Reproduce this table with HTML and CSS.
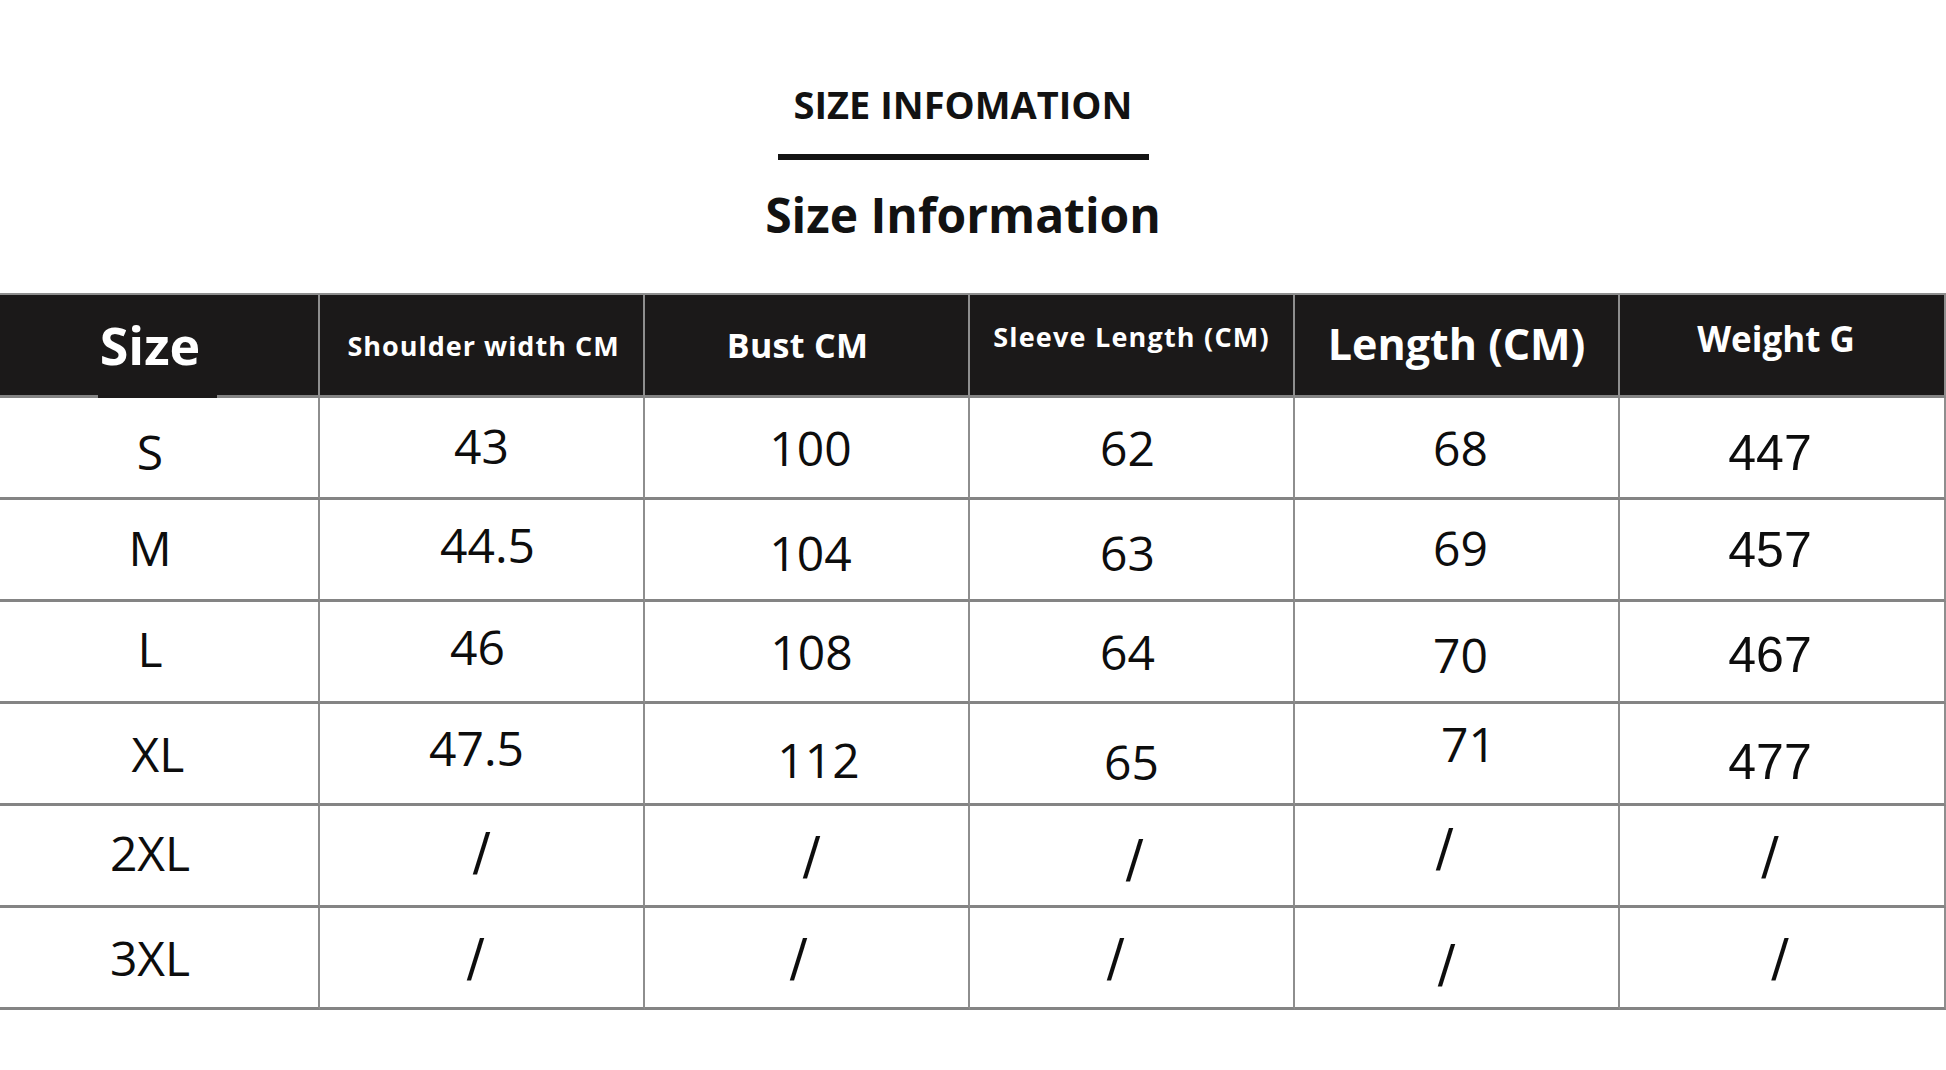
FILE: index.html
```html
<!DOCTYPE html>
<html lang="en">
<head>
<meta charset="utf-8">
<title>Size Information</title>
<link rel="stylesheet" href="styles.css">
</head>
<body>
<header class="intro">
  <h1 class="title-en">SIZE INFOMATION</h1>
  <div class="rule"></div>
  <h2 class="title">Size Information</h2>
</header>

<section class="table">
  <div class="cell head first"><span class="h-size">Size</span></div>
  <div class="cell head"><span class="h-shoulder rt2">Shoulder width CM</span></div>
  <div class="cell head"><span class="h-bust lf9">Bust CM</span></div>
  <div class="cell head"><span class="h-sleeve up9">Sleeve Length (CM)</span></div>
  <div class="cell head"><span class="h-length up2">Length (CM)</span></div>
  <div class="cell head last"><span class="h-weight up7">Weight G</span></div>

  <div class="cell first"><span class="val dn4">S</span></div>
  <div class="cell"><span class="val up2">43</span></div>
  <div class="cell"><span class="val rt4">100</span></div>
  <div class="cell"><span class="val lf4">62</span></div>
  <div class="cell"><span class="val rt4">68</span></div>
  <div class="cell last"><span class="val arial dn5">447</span></div>

  <div class="cell first"><span class="val up2">M</span></div>
  <div class="cell"><span class="val up5 rt6">44.5</span></div>
  <div class="cell"><span class="val dn3 rt4">104</span></div>
  <div class="cell"><span class="val dn3 lf4">63</span></div>
  <div class="cell"><span class="val up2 rt4">69</span></div>
  <div class="cell last"><span class="val arial">457</span></div>

  <div class="cell first"><span class="val up3">L</span></div>
  <div class="cell"><span class="val up5 lf4">46</span></div>
  <div class="cell"><span class="val rt5">108</span></div>
  <div class="cell"><span class="val lf4">64</span></div>
  <div class="cell"><span class="val dn3 rt4">70</span></div>
  <div class="cell last"><span class="val arial dn3">467</span></div>

  <div class="cell first"><span class="val rt8">XL</span></div>
  <div class="cell"><span class="val up6 lf5">47.5</span></div>
  <div class="cell"><span class="val dn6 rt12">112</span></div>
  <div class="cell"><span class="val dn8">65</span></div>
  <div class="cell"><span class="val up10 rt12">71</span></div>
  <div class="cell last"><span class="val arial dn8">477</span></div>

  <div class="cell first"><span class="val up3">2XL</span></div>
  <div class="cell"><span class="slash up4">/</span></div>
  <div class="cell"><span class="slash rt5">/</span></div>
  <div class="cell"><span class="slash dn3 rt3">/</span></div>
  <div class="cell"><span class="slash up8 lf12">/</span></div>
  <div class="cell last"><span class="slash">/</span></div>

  <div class="cell first"><span class="val">3XL</span></div>
  <div class="cell"><span class="slash lf6">/</span></div>
  <div class="cell"><span class="slash lf8">/</span></div>
  <div class="cell"><span class="slash lf16">/</span></div>
  <div class="cell"><span class="slash dn6 lf10">/</span></div>
  <div class="cell last"><span class="slash rt10">/</span></div>
</section>
</body>
</html>
```

FILE: styles.css
```css
* { box-sizing: border-box; }

html, body {
  margin: 0;
  background: #ffffff;
}

body {
  font-family: "Open Sans", "Liberation Sans", sans-serif;
  color: #111111;
}

/* ---------- titles ---------- */
.intro {
  display: flex;
  flex-direction: column;
  align-items: center;
  padding: 85px 20px 0 0;
}

.title-en {
  margin: 0;
  font-size: 38px;
  line-height: 39px;
  font-weight: 700;
  color: #121212;
}

.rule {
  width: 371px;
  height: 6px;
  margin-top: 30px;
  background: #141414;
}

.title {
  margin: 30px 0 0;
  font-size: 48px;
  line-height: 49px;
  font-weight: 700;
  color: #121212;
}

/* ---------- table ---------- */
.table {
  margin-top: 54px;
  display: grid;
  grid-template-columns: 320px repeat(4, 325px) 1fr;
  border-top: 2px solid #8e8e8e;
}

.cell {
  display: flex;
  align-items: center;
  justify-content: center;
  height: 102px;
  border-right: 2px solid #8e8e8e;
  border-bottom: 3px solid #848484;
}

.cell.first { padding-right: 18px; }
.cell.last { padding-right: 24px; }

.head {
  height: 103px;
  background: #1b1919;
  color: #ffffff;
  font-weight: 700;
}

.head.last { padding-right: 12px; }

.head.first { position: relative; }
.head.first::after {
  content: "";
  position: absolute;
  left: 98px;
  bottom: -3px;
  width: 119px;
  height: 3px;
  background: #1b1919;
}

.head span { line-height: 1; white-space: nowrap; }

.h-size { font-size: 52px; }
.h-shoulder { font-size: 27px; letter-spacing: 1px; }
.h-bust { font-size: 34px; letter-spacing: 0.3px; }
.h-sleeve { font-size: 27px; letter-spacing: 1.2px; }
.h-length { font-size: 43px; }
.h-weight { font-size: 35px; }

.val {
  font-size: 48px;
  line-height: 1;
  font-weight: 400;
  color: #0d0d0d;
}

.val.arial {
  font-family: "Liberation Sans", Arial, sans-serif;
  font-size: 50px;
}

.slash {
  font-family: "DejaVu Sans", sans-serif;
  font-size: 52px;
  line-height: 1;
  color: #0d0d0d;
}

/* ---------- hand-set nudges (as in the original artwork) ---------- */
.up2 { margin-bottom: 4px; }
.up3 { margin-bottom: 6px; }
.up4 { margin-bottom: 8px; }
.up5 { margin-bottom: 10px; }
.up6 { margin-bottom: 12px; }
.up7 { margin-bottom: 14px; }
.up8 { margin-bottom: 16px; }
.up9 { margin-bottom: 18px; }
.up10 { margin-bottom: 20px; }

.dn3 { margin-top: 6px; }
.dn4 { margin-top: 8px; }
.dn5 { margin-top: 10px; }
.dn6 { margin-top: 12px; }
.dn8 { margin-top: 16px; }

.lf4 { margin-right: 8px; }
.lf5 { margin-right: 10px; }
.lf6 { margin-right: 12px; }
.lf8 { margin-right: 16px; }
.lf9 { margin-right: 18px; }
.lf10 { margin-right: 20px; }
.lf12 { margin-right: 24px; }
.lf16 { margin-right: 32px; }

.rt2 { margin-left: 4px; }
.rt3 { margin-left: 6px; }
.rt4 { margin-left: 8px; }
.rt5 { margin-left: 10px; }
.rt6 { margin-left: 12px; }
.rt8 { margin-left: 16px; }
.rt10 { margin-left: 20px; }
.rt12 { margin-left: 24px; }
```
